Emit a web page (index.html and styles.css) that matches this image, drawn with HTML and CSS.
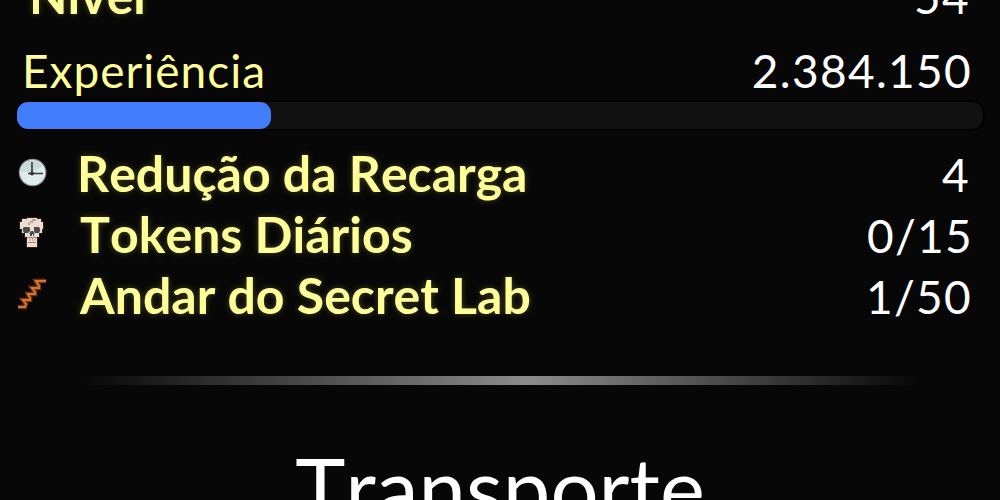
FILE: index.html
```html
<!DOCTYPE html>
<html lang="pt-BR">
<head>
  <meta charset="utf-8">
  <title>Status</title>
  <link rel="stylesheet" href="styles.css">
</head>
<body>

<div class="panel">
  <div class="row level">
    <span class="label">Nível</span>
    <span class="value">54</span>
  </div>

  <!-- Experience -->
  <div class="row exp">
    <span class="label">Experiência</span>
    <span class="value">2.384.150</span>
  </div>
  <div class="bar"><div class="fill"></div></div>

  <!-- Stats -->
  <div class="stats">
    <div class="row cooldown">
      <svg class="icon" viewBox="0 0 32 32">
        <circle cx="15.6" cy="14.5" r="13.8" fill="#8b9797"/>
        <circle cx="15.6" cy="14.5" r="12.6" fill="#e0ebeb"/>
        <path d="M3.6 14a12 12 0 0 1 22-6L16 14z" fill="#c8dada"/>
        <path d="M15 4v12M11 15.5h15" stroke="#343c3c" stroke-width="1.6"/>
        <circle cx="15" cy="15.5" r="2" fill="#303838"/>
      </svg>
      <span class="label">Redução da Recarga</span>
      <span class="value">4</span>
    </div>
    <div class="row tokens">
      <svg class="icon" viewBox="0 0 32 32">
        <path d="M8 0h13v1h4v3h2v8h-1v5h-3v4h-2v10H9V21H7v-4H4v-5H2V4h2V1h4z" fill="#371b12"/>
        <path d="M10 1h10v1h4v3h2v7h-1v4h-3v4h-2v10H10V20H8v-4H5v-4H3V5h2V2h5z" fill="#e9ddd4"/>
        <path d="M15 2h4v2h-3v2h-3v2h-2V6h2V4h2z" fill="#b7a08f"/>
        <path d="M7 10h5l1 1v3l-2 2H7l-1-2v-3zM17 10h5l1 2v2l-1 2h-4l-1-2zM14 14h2l2 3h-1v2h-1v-2h-1v2h-2v-2h-1z" fill="#4a4c4c"/>
        <path d="M10 20h10v1H10zM11 25h8v1h-8z" fill="#aa8470"/>
        <path d="M13 21v3M15.5 21v3M18 21v3" stroke="#c3a896"/>
      </svg>
      <span class="label">Tokens Diários</span>
      <span class="value">0/15</span>
    </div>
    <div class="row floor">
      <svg class="icon" viewBox="0 0 32 32">
        <path class="stairs-edge" d="M1 29h7l1-3-3-4h7v-2l-2-4h7v-2l-3-4h7V8l-3-5h10"/>
        <path class="stairs" d="M1 29h7l1-3-3-4h7v-2l-2-4h7v-2l-3-4h7V8l-3-5h10"/>
      </svg>
      <span class="label">Andar do Secret Lab</span>
      <span class="value">1/50</span>
    </div>
  </div>

  <div class="divider"></div>
  <h1 class="title">Transporte</h1>
</div>

</body>
</html>
```
FILE: styles.css
```css
body {
  margin: 0;
  height: 500px;
  overflow: hidden;
  background-color: #070707;
  color: #ffffff;
  font-family: Lato, sans-serif;
  font-kerning: none;
}

.panel {
  display: flex;
  flex-direction: column;
  height: 500px;
  overflow: hidden;
}

.row {
  display: flex;
  flex-shrink: 0;
  align-items: baseline;
  height: 61px;
  line-height: 61px;
  padding: 0 27px 0 17px;
}

.label {
  color: #ffff99;
  font-size: 50px;
  font-weight: bold;
  text-shadow: 0 0 6px rgba(255, 255, 120, 0.25);
  white-space: nowrap;
}

.value {
  margin-left: auto;
  font-size: 46px;
  letter-spacing: 1.3px;
}

.level {
  margin-top: -35px;
  padding-left: 29px;
  padding-right: 30px;
}

.exp {
  margin-top: 14px;
  padding-left: 22px;
  padding-right: 28px;
}

.exp .label {
  font-size: 46px;
  font-weight: normal;
  letter-spacing: 1px;
  text-shadow: none;
}

.bar {
  flex-shrink: 0;
  height: 27px;
  margin: 1px 17px 0;
  border-radius: 11px;
  background-color: #111111;
  box-shadow: 0 0 0 1.5px #000000;
}

.fill {
  width: 254px;
  height: 27px;
  border-radius: 11px;
  background-color: #427efc;
}

.stats {
  margin-top: 14px;
}

.icon {
  width: 32px;
  height: 32px;
  align-self: center;
  margin-right: 28px;
}

.cooldown {
  padding-right: 30px;
}

.tokens .icon,
.floor .icon {
  margin-right: 31px;
  margin-bottom: 4px;
}

.floor {
  padding-right: 28px;
}

.stairs-edge {
  fill: none;
  stroke: #71300e;
  stroke-width: 4.5;
}

.stairs {
  fill: none;
  stroke: #d1763b;
  stroke-width: 2;
}

.divider {
  flex-shrink: 0;
  width: 860px;
  height: 9px;
  margin: 50px 0 0 84px;
  background: linear-gradient(to right, transparent, #8c8c8c 51.5%, transparent 97%);
}

.title {
  margin: 53px 0 0;
  font-size: 85px;
  font-weight: normal;
  line-height: 98px;
  text-align: center;
}
```
